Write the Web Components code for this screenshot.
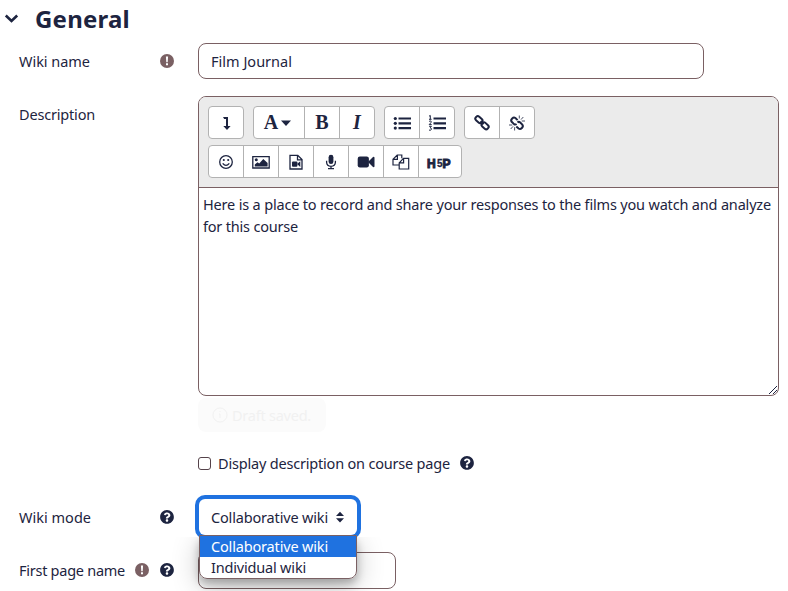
<!DOCTYPE html>
<html lang="en">
<head>
<meta charset="utf-8">
<title>General</title>
<style>
body{margin:0;background:#fff;color:#1d2440;font-family:"Noto Sans","Open Sans",sans-serif;font-size:14.5px;overflow:hidden;height:591px}
</style>
</head>
<body>
<settings-form></settings-form>
<script>
const define=(name,html,setup)=>customElements.define(name,class extends HTMLElement{
  connectedCallback(){
    if(this.shadowRoot)return;
    const t=document.createElement('template');t.innerHTML=html;
    this.attachShadow({mode:'open'}).append(t.content.cloneNode(true));
    if(setup)setup(this);
  }
});

const icons={
chevron:'<path d="M2.8 5.5 8.5 11l5.700-5.500" fill="none" stroke="currentColor" stroke-width="2.600"/>',
required:'<circle cx="8" cy="8" r="7" fill="#7a6063"/><path d="M6.900 3.600h2.200l-.4 5.600H7.300zM7 10.300h2v2H7z" fill="#fff"/>',
help:'<g transform="translate(.9 .9) scale(.0277)"><path d="M504 256c0 136.997-111.043 248-248 248S8 392.997 8 256C8 119.083 119.043 8 256 8s248 111.083 248 248zM262.655 90c-54.497 0-89.255 22.957-116.549 63.758-3.536 5.286-2.353 12.415 2.715 16.258l34.699 26.310c5.205 3.947 12.621 3.008 16.665-2.122 17.864-22.658 30.113-35.797 57.303-35.797 20.429 0 45.698 13.148 45.698 32.958 0 14.976-12.363 22.667-32.534 33.976C247.128 238.528 216 254.941 216 296v4c0 6.627 5.373 12 12 12h56c6.627 0 12-5.373 12-12v-1.333c0-28.462 83.186-29.647 83.186-106.667 0-58.002-60.165-102-116.531-102zM256 338c-25.365 0-46 20.635-46 46 0 25.364 20.635 46 46 46s46-20.636 46-46c0-25.365-20.635-46-46-46z"/></g>',
expand:'<path d="M5 2h5v9h2.600L9 15 5.300 11H8V4H6.200z"/>',
caret:'<path d="M3 5.500h10L8 11z"/>',
ul:'<circle cx="1.300" cy="3.500" r="1.600"/><circle cx="1.300" cy="8.300" r="1.600"/><circle cx="1.300" cy="13.100" r="1.600"/><path d="M4.500 2.400H17v2.200H4.500zM4.500 7.200H17v2.200H4.500zM4.500 12H17v2.200H4.500z"/>',
ol:'<path d="M4.500 2.400H17v2.200H4.500zM4.500 7.200H17v2.200H4.500zM4.500 12H17v2.200H4.500z"/><path d="M0 1.200 1.300.500V4.200M0 4.300h2.600M.1 6.400Q1.300 5.500 2.200 6.300 2.700 7.300.2 9.600H2.700M.1 11.300H2.400L1.200 12.800Q2.800 13 2.300 14.600 1.300 15.800 0 15" fill="none" stroke="currentColor" stroke-width="1"/>',
link:'<g fill="none" stroke="currentColor" stroke-width="2"><rect x="-3.800" y="-2.400" width="7.600" height="4.800" rx="2.100" transform="translate(4.900 4.600) rotate(42)"/><rect x="-3.800" y="-2.400" width="7.600" height="4.800" rx="2.100" transform="translate(11.100 10.800) rotate(42)"/><path d="m6.500 6.300 3 3"/></g>',
unlink:'<g fill="none" stroke="currentColor" stroke-width="2"><path d="M8.600 5.100 6.400 3Q4.800 1.900 3.200 3.400 1.400 5.100 2.700 6.800L5 9.100Q6.300 10 7.600 9"/><path d="M7.300 11.400 9.600 13.500Q11.200 14.700 12.900 13 14.600 11.300 13.300 9.600L11 7.300Q9.700 6.400 8.500 7.500"/></g><path d="M10.300 3.500V.5M12 4.600 14.300 2M12.700 6H16M5.600 12.200V15.500M4 11.400 1.700 14M3.300 10H0" fill="none" stroke="currentColor" stroke-width=".8"/>',
smile:'<circle cx="8" cy="8" r="6.300" fill="none" stroke="currentColor" stroke-width="1.300"/><circle cx="5.800" cy="6" r="1.050"/><circle cx="10.200" cy="6" r="1.050"/><path d="M4.700 9.300Q8 13.300 11.300 9.300" fill="none" stroke="currentColor" stroke-width="1.300"/>',
image:'<path d="M-.2 2.600H16.200V14H-.2z" fill="none" stroke="currentColor" stroke-width="1.300"/><circle cx="3.300" cy="5.800" r="1.500"/><path d="M1.800 12.500V10.500L4.500 8.300 6.200 9.500 10.300 5 14.600 9V12.500z"/>',
filevideo:'<path d="M2 1.300H9.800L14 5.500V15H2zM9.500 1.300V5.800H14" fill="none" stroke="currentColor" stroke-width="1.300"/><rect x="4" y="7.500" width="5.400" height="5.300" rx="1"/><path d="m9 10.100 3.300-2.800v5.600z"/>',
mic:'<rect x="5.600" y=".8" width="4.800" height="9.300" rx="2.400"/><path d="M3.600 6.800V8.300Q3.800 12.200 8 12.300 12.200 12.200 12.400 8.300V6.800M8 12v2.600M5 14.700h6" fill="none" stroke="currentColor" stroke-width="1.300"/>',
video:'<rect x="-.3" y="2.600" width="11.200" height="10.800" rx="2.200"/><path d="m10 8 5-5q1.300-.5 1.500.7v8.600q-.2 1.200-1.500.7z"/>',
files:'<path d="M6 11H0V5.300L4.200 1H8.800V4.200M4.400 1V5.300H0M6.200 8.800 10.500 4.300H15.700V15H6.200zM10.600 4.300V8.800H6.200" fill="none" stroke="currentColor" stroke-width="1.200"/>',
sort:'<path d="M4 7h8L8 2.700zM4 9.200h8L8 13.500z"/>'
};
define('ui-icon','<style>:host{display:inline-flex;flex:none;width:16px;height:16px}svg{overflow:visible;fill:currentColor}</style><svg width="16" height="16" viewBox="0 0 16 16"></svg>',h=>{h.shadowRoot.querySelector('svg').innerHTML=icons[h.getAttribute('name')]});

/* A single line whose tracking is adjusted to fill the given width. */
define('ui-text','<style>:host{display:inline-block;white-space:nowrap;flex:none}</style><span><slot></slot></span>',h=>{
  const s=h.shadowRoot.querySelector('span'),w=+h.getAttribute('w');
  if(w){s.style.letterSpacing=(w-s.getBoundingClientRect().width)/h.textContent.length+'px';h.style.width=w+'px'}
});

define('form-row',`<style>
:host{display:grid;grid-template-columns:156px 1fr;column-gap:23px;padding-left:19px;align-items:start}
.l{display:flex;height:var(--lh,36px);align-items:center;justify-content:space-between}
.i{display:flex;gap:9px}</style>
<div class="l"><slot name="label"></slot><span class="i"><slot name="icons"></slot></span></div><div><slot></slot></div>`);

define('text-field',`<style>:host{display:flex;align-items:center;box-sizing:border-box;height:36px;border:1px solid #7a6063;border-radius:8px;padding:0 12px;background:#fff}</style><slot></slot>`);

define('button-group',`<style>:host{display:flex;box-sizing:border-box;height:33px;border:1px solid #b2b2b2;border-radius:4px;background:#fff;overflow:hidden}
::slotted(*){border-left:1px solid #b2b2b2}::slotted(:first-child){border-left:0}</style><slot></slot>`);
define('tool-button',`<style>:host{display:flex;box-sizing:border-box;width:35px;align-items:center;justify-content:center}:host(:first-child){width:34px}
:host([wide]){width:50px}:host([h5p]){width:43px}
b,i{font-family:"Liberation Serif",serif;font-size:20px;line-height:31px;font-weight:bold}</style><slot></slot>`,h=>{
  const g=h.getAttribute('glyph');if(g){const e=document.createElement(g==='I'?'i':'b');e.textContent=g;h.shadowRoot.querySelector('slot').before(e)}
});
define('h5p-mark',`<style>:host{display:block;width:26px;height:16px}svg{overflow:visible}text{font:bold 12px "Liberation Sans",sans-serif;fill:currentColor;stroke:currentColor;stroke-width:1}.s{font-size:10px;stroke-width:.3}</style><svg width="26" height="16"><text x="0" y="14" textLength="10">H</text><text class="s" x="10" y="13">5</text><text x="15.500" y="14" textLength="9">P</text></svg>`);

define('editor-toolbar',`<style>:host{display:flex;flex-direction:column;gap:6px;padding:9px;height:90px;box-sizing:border-box;background:#ebebeb;border-bottom:1px solid #7a6063}.r{display:flex;gap:9px}</style>
<div class="r">
<button-group><tool-button><ui-icon name="expand"></ui-icon></tool-button></button-group>
<button-group><tool-button wide glyph="A"><ui-icon name="caret"></ui-icon></tool-button><tool-button glyph="B"></tool-button><tool-button glyph="I"></tool-button></button-group>
<button-group><tool-button><ui-icon name="ul"></ui-icon></tool-button><tool-button><ui-icon name="ol"></ui-icon></tool-button></button-group>
<button-group><tool-button><ui-icon name="link"></ui-icon></tool-button><tool-button><ui-icon name="unlink"></ui-icon></tool-button></button-group>
</div><div class="r"><button-group>
${['smile','image','filevideo','mic','video','files'].map(n=>`<tool-button><ui-icon name="${n}"></ui-icon></tool-button>`).join('')}
<tool-button h5p><h5p-mark></h5p-mark></tool-button></button-group></div>`);

define('rich-editor',`<style>:host{display:flex;flex-direction:column;box-sizing:border-box;width:581px;height:300px;border:1px solid #7a6063;border-radius:8px;overflow:hidden;position:relative}
editor-toolbar{height:91px}.c{padding:5px 4px;line-height:22px;display:flex;flex-direction:column;align-items:start}
svg{position:absolute;right:0;bottom:0}</style>
<editor-toolbar></editor-toolbar><div class="c"><slot></slot></div>
<svg width="10" height="10"><path d="m1 9 8-8M5 9l4-4" stroke="#1d2440" stroke-width="1"/></svg>`);

define('draft-toast',`<style>:host{display:flex;align-items:center;box-sizing:border-box;gap:4px;width:128px;height:34px;padding:0 14px;border-radius:8px;background:#fbfbfb;color:#f1f1f1}</style><svg width="16" height="16" fill="none" stroke="currentColor"><circle cx="8" cy="8" r="7"/><path d="M7 7h1v4M8 4v1"/></svg><slot></slot>`);

define('select-box',`<style>:host{display:block;position:relative;width:158px;height:36px}
.f{display:flex;align-items:center;gap:4px;box-sizing:border-box;height:36px;padding-left:12px;background:#fff;border-radius:6px;box-shadow:0 0 0 4px #1f72e0}
.m{position:absolute;z-index:2;left:0;top:36px;width:158px;height:44px;box-sizing:border-box;background:#fff;border:1px solid #7a6063;border-radius:0 0 8px 8px;overflow:hidden}
.w{position:absolute;z-index:1;left:0;top:36px;width:158px;height:44px;border-radius:8px;box-shadow:0 5px 9px rgba(0,0,0,.25),0 7px 28px rgba(0,0,0,.23);clip-path:inset(2px -60px -60px -60px)}
::slotted([slot=menu]){display:block}</style>
<div class="f"><slot></slot><ui-icon name="sort"></ui-icon></div><div class="w"></div><div class="m"><slot name="menu"></slot></div>`);
define('menu-option',`<style>:host{display:flex;align-items:center;height:21px;padding-left:11px;line-height:21px}:host([selected]){background:#1f72e0;color:#fff}</style><slot></slot>`);
define('check-row',`<style>:host{display:flex;align-items:center;height:22px}.b{width:11px;height:11px;border:1px solid #55434a;border-radius:3px;margin-right:7px}ui-icon{margin-left:9px}</style><span class="b"></span><slot></slot><ui-icon name="help"></ui-icon>`);

define('settings-form',`<style>:host{display:block;width:788px;height:591px;overflow:hidden}
header{display:flex;align-items:center;height:36px;padding-left:3px;font-size:24px;font-weight:bold;gap:16px}
.a{margin-top:7px}.b{margin-top:17px;--lh:36px}.c{margin-top:2px}.d{margin-top:18px}.e{margin-top:25px}.f{margin-top:17px}
.n{width:506px}.p{width:198px;height:37px}.s{margin-left:1px}</style>
<header><ui-icon name="chevron"></ui-icon><ui-text w="95">General</ui-text></header>
<form-row class="a"><ui-text slot="label" w="71">Wiki name</ui-text><ui-icon slot="icons" name="required"></ui-icon><text-field class="n"><ui-text w="81">Film Journal</ui-text></text-field></form-row>
<form-row class="b"><ui-text slot="label" w="76">Description</ui-text><rich-editor><ui-text w="568">Here is a place to record and share your responses to the films you watch and analyze</ui-text><ui-text w="95">for this course</ui-text></rich-editor></form-row>
<form-row class="c"><draft-toast><ui-text w="79">Draft saved.</ui-text></draft-toast></form-row>
<form-row class="d" style="--lh:22px"><check-row><ui-text w="232">Display description on course page</ui-text></check-row></form-row>
<form-row class="e"><ui-text slot="label" w="72">Wiki mode</ui-text><ui-icon slot="icons" name="help"></ui-icon><select-box class="s"><ui-text w="117">Collaborative wiki</ui-text><menu-option slot="menu" selected><ui-text w="117">Collaborative wiki</ui-text></menu-option><menu-option slot="menu"><ui-text w="95">Individual wiki</ui-text></menu-option></select-box></form-row>
<form-row class="f"><ui-text slot="label" w="106">First page name</ui-text><ui-icon slot="icons" name="required"></ui-icon><ui-icon slot="icons" name="help"></ui-icon><text-field class="p"></text-field></form-row>`);
</script>
</body>
</html>
